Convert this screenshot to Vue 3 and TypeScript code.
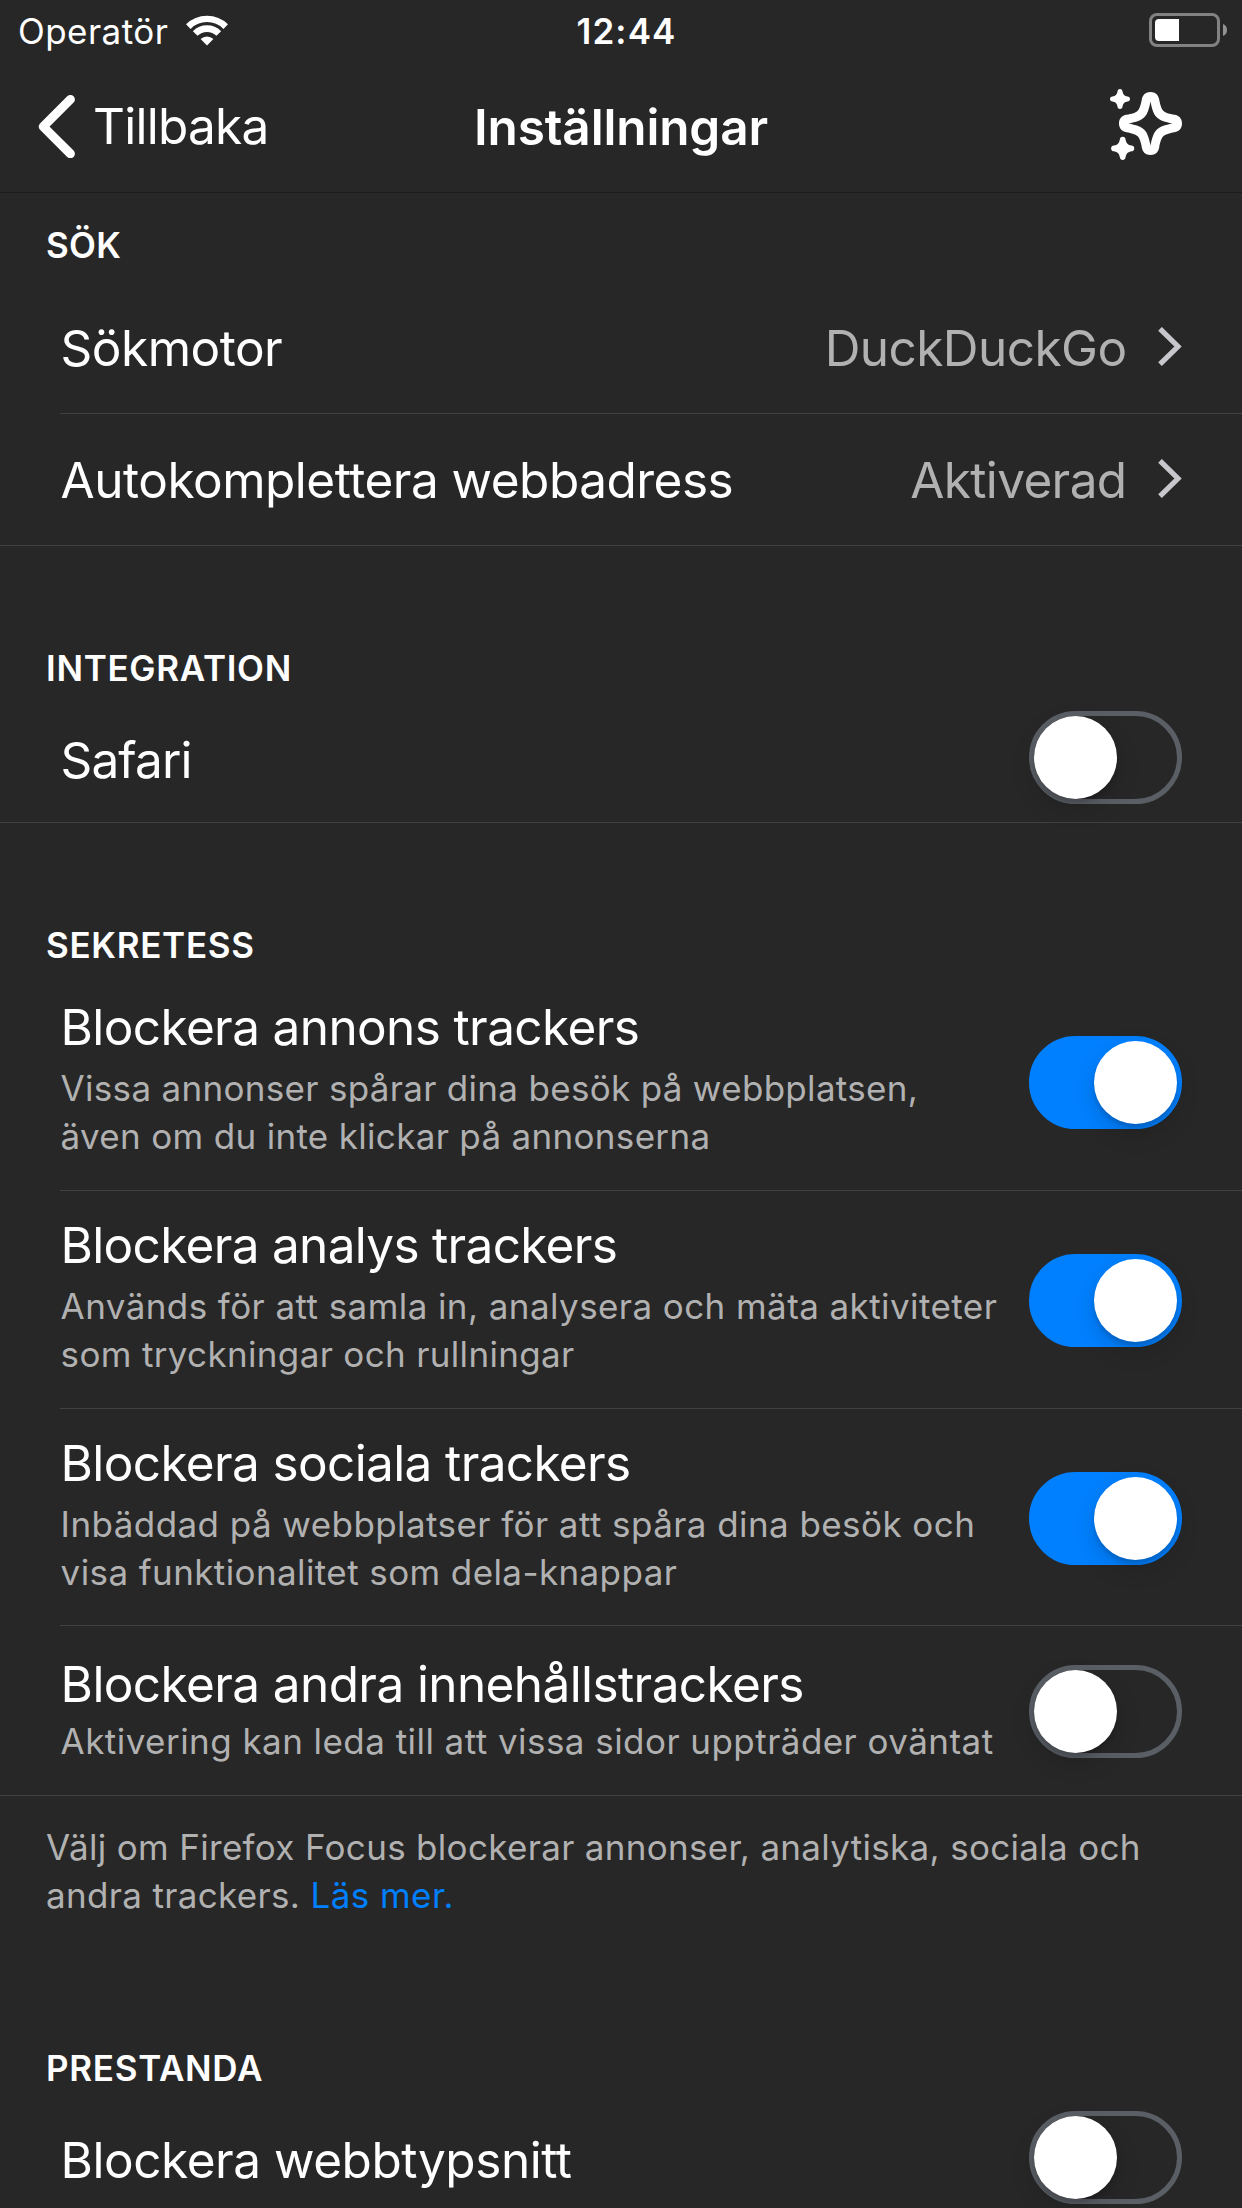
<script setup lang="ts">
import { ref } from 'vue'

interface TextRun {
  text: string
  tracking: number
}

interface LinkRow {
  label: TextRun
  value: TextRun
}

interface TrackerRow {
  label: TextRun
  lines: TextRun[]
  on: boolean
  size: string
}

const run = (text: string, tracking: number): TextRun => ({ text, tracking })
const spacing = (item: TextRun) => ({ letterSpacing: `${item.tracking}px` })

const links: LinkRow[] = [
  { label: run('Sökmotor', -0.506), value: run('DuckDuckGo', -0.568) },
  { label: run('Autokomplettera webbadress', -0.498), value: run('Aktiverad', -0.62) },
]

const safariOn = ref(false)
const webFontsOn = ref(false)

const trackers = ref<TrackerRow[]>([
  {
    label: run('Blockera annons trackers', -0.62),
    lines: [
      run('Vissa annonser spårar dina besök på webbplatsen,', 0.31),
      run('även om du inte klickar på annonserna', 0.32),
    ],
    on: true,
    size: 'tall',
  },
  {
    label: run('Blockera analys trackers', -0.69),
    lines: [
      run('Används för att samla in, analysera och mäta aktiviteter', 0.42),
      run('som tryckningar och rullningar', 0.34),
    ],
    on: true,
    size: 'tall',
  },
  {
    label: run('Blockera sociala trackers', -0.63),
    lines: [
      run('Inbäddad på webbplatser för att spåra dina besök och', 0.425),
      run('visa funktionalitet som dela-knappar', 0.4),
    ],
    on: true,
    size: 'tall tight',
  },
  {
    label: run('Blockera andra innehållstrackers', -0.6),
    lines: [run('Aktivering kan leda till att vissa sidor uppträder oväntat', 0.45)],
    on: false,
    size: 'short',
  },
])
</script>

<template>
  <div class="screen">
    <header class="status-bar">
      <div class="carrier">
        <span class="carrier-name">Operatör</span>
        <svg class="wifi" width="42" height="31" viewBox="0 0 42 31">
          <g fill="none" stroke="#fff">
            <path d="M2.3 11.6A26.6 26.6 0 0 1 39.7 11.6" stroke-width="6.4" />
            <path d="M9.2 18.5A16.7 16.7 0 0 1 32.8 18.5" stroke-width="6.6" />
          </g>
          <path d="M21 30.6L14.6 24.1A9.2 9.2 0 0 1 27.4 24.1Z" fill="#fff" />
        </svg>
      </div>
      <div class="clock">12:44</div>
      <svg class="battery" width="78" height="34" viewBox="0 0 78 34">
        <rect x="1.5" y="1.5" width="68" height="31" rx="6.5" fill="none" stroke="#828282" stroke-width="3" />
        <path d="M30 6V28H10Q6 28 6 24V10Q6 6 10 6Z" fill="#fff" />
        <path d="M74 11Q78 12.5 78 17T74 23Z" fill="#939393" />
      </svg>
    </header>

    <nav class="nav-bar">
      <button class="back" type="button">
        <svg width="37" height="64" viewBox="0 0 37 64">
          <path d="M32.4 5.4L5.2 32.6L32.4 59.8" fill="none" stroke="#fff" stroke-width="9" stroke-linecap="round" stroke-linejoin="round" />
        </svg>
        <span>Tillbaka</span>
      </button>
      <h1 class="title">Inställningar</h1>
      <button class="whats-new" type="button" aria-label="Nyheter">
        <svg width="72" height="71" viewBox="0 0 72 71" fill="#fff">
          <path
            transform="translate(40.5 34.5)"
            fill-rule="evenodd"
            d="M-8.7-24C-8-28.5-5-31.5 0-31.5S8-28.5 8.7-24C9.5-19 11-14.5 12.8-12.8C14.5-11 19-9.5 24-8.7C28.5-8 31.5-5 31.5 0S28.5 8 24 8.7C19 9.5 14.5 11 12.8 12.8C11 14.5 9.5 19 8.7 24C8 28.5 5 31.5 0 31.5S-8 28.5-8.7 24C-9.5 19-11 14.5-12.8 12.8C-14.5 11-19 9.5-24 8.7C-28.5 8-31.5 5-31.5 0S-28.5-8-24-8.7C-19-9.5-14.5-11-12.8-12.8C-11-14.5-9.5-19-8.7-24ZM0-22C-1.4-14.5-3.2-9-6.2-6.2C-9-3.2-14.5-1.4-22 0C-14.5 1.4-9 3.2-6.2 6.2C-3.2 9-1.4 14.5 0 22C1.4 14.5 3.2 9 6.2 6.2C9 3.2 14.5 1.4 22 0C14.5-1.4 9-3.2 6.2-6.2C3.2-9 1.4-14.5 0-22Z"
          />
          <path
            transform="translate(10 10)"
            d="M0-10C1.7-10 2.3-9 2.5-7.5C3-4.5 4.5-3 7.5-2.5C9-2.3 10-1.7 10 0S9 2.3 7.5 2.5C4.5 3 3 4.5 2.5 7.5C2.3 9 1.7 10 0 10S-2.3 9-2.5 7.5C-3 4.5-4.5 3-7.5 2.5C-9 2.3-10 1.7-10 0S-9-2.3-7.5-2.5C-4.5-3-3-4.5-2.5-7.5C-2.3-9-1.7-10 0-10Z"
          />
          <path
            transform="translate(12.7 59.4) scale(1.16)"
            d="M0-10C1.7-10 2.3-9 2.5-7.5C3-4.5 4.5-3 7.5-2.5C9-2.3 10-1.7 10 0S9 2.3 7.5 2.5C4.5 3 3 4.5 2.5 7.5C2.3 9 1.7 10 0 10S-2.3 9-2.5 7.5C-3 4.5-4.5 3-7.5 2.5C-9 2.3-10 1.7-10 0S-9-2.3-7.5-2.5C-4.5-3-3-4.5-2.5-7.5C-2.3-9-1.7-10 0-10Z"
          />
        </svg>
      </button>
    </nav>

    <main>
      <section>
        <h2 class="section-title first">SÖK</h2>
        <div class="rows">
          <div v-for="item in links" :key="item.label.text" class="row link-row">
            <span class="label" :style="spacing(item.label)">{{ item.label.text }}</span>
            <span class="value" :style="spacing(item.value)">{{ item.value.text }}</span>
            <svg class="chevron" width="24" height="39" viewBox="0 0 24 39">
              <path d="M2 1.8L20 19.5L2 37.2" fill="none" stroke="#c7c7cc" stroke-width="5.2" />
            </svg>
          </div>
        </div>
      </section>

      <section>
        <h2 class="section-title">INTEGRATION</h2>
        <div class="rows">
          <div class="row toggle-row">
            <span class="label safari">Safari</span>
            <button class="switch" :class="{ on: safariOn }" type="button" @click="safariOn = !safariOn">
              <span class="knob"></span>
            </button>
          </div>
        </div>
      </section>

      <section>
        <h2 class="section-title spaced">SEKRETESS</h2>
        <div class="rows">
          <div v-for="item in trackers" :key="item.label.text" class="row tracker-row" :class="item.size">
            <div class="copy">
              <div class="label" :style="spacing(item.label)">{{ item.label.text }}</div>
              <div class="detail">
                <div v-for="line in item.lines" :key="line.text" :style="spacing(line)">{{ line.text }}</div>
              </div>
            </div>
            <button class="switch" :class="{ on: item.on }" type="button" @click="item.on = !item.on">
              <span class="knob"></span>
            </button>
          </div>
        </div>
        <p class="footnote">
          Välj om Firefox Focus blockerar annonser, analytiska, sociala och<br />
          <span class="footnote-end">andra trackers. </span><a class="more">Läs mer.</a>
        </p>
      </section>

      <section>
        <h2 class="section-title">PRESTANDA</h2>
        <div class="row toggle-row">
          <span class="label fonts">Blockera webbtypsnitt</span>
          <button class="switch" :class="{ on: webFontsOn }" type="button" @click="webFontsOn = !webFontsOn">
            <span class="knob"></span>
          </button>
        </div>
      </section>
    </main>
  </div>
</template>

<style>
body {
  margin: 0;
  background: #272727;
}
</style>

<style scoped>
.screen {
  width: 1242px;
  height: 2208px;
  overflow: hidden;
  background: #272727;
  color: #fff;
  font-family: Inter, 'Liberation Sans', sans-serif;
  font-size: 49.5px;
  white-space: nowrap;
}

button {
  padding: 0;
  border: 0;
  background: none;
  color: inherit;
  font: inherit;
}

svg {
  display: block;
  flex: none;
}

.status-bar {
  display: grid;
  grid-template-columns: 1fr auto 1fr;
  height: 62px;
  padding: 0 15px 0 18px;
  font-size: 35px;
  line-height: 62px;
}

.carrier {
  display: flex;
  align-items: flex-start;
  gap: 18px;
}

.carrier-name {
  letter-spacing: 0.454px;
}

.wifi {
  margin-top: 14.5px;
}

.clock {
  padding-left: 8px;
  font-weight: 600;
  letter-spacing: 1.131px;
}

.battery {
  justify-self: end;
  margin-top: 13px;
}

.nav-bar {
  display: grid;
  grid-template-columns: 1fr auto 1fr;
  align-items: center;
  box-sizing: border-box;
  height: 131px;
  padding: 0 60px 0 38px;
  border-bottom: 1px solid #1b1b1b;
}

.back {
  display: flex;
  align-items: center;
  gap: 18px;
  padding-bottom: 2px;
  line-height: 64px;
  letter-spacing: -0.75px;
}

.title {
  margin: 0 0 0 22px;
  font-size: 49.5px;
  font-weight: 600;
  line-height: 64px;
  letter-spacing: -0.145px;
}

.whats-new {
  justify-self: end;
  margin-bottom: 5px;
}

.section-title {
  box-sizing: border-box;
  height: 147px;
  margin: 0;
  padding: 98px 46px 0;
  font-size: 35px;
  font-weight: 600;
  line-height: 48px;
  letter-spacing: 0.7px;
}

.section-title.first {
  height: 89px;
  padding-top: 28px;
  letter-spacing: 0.268px;
}

.section-title.spaced {
  height: 150px;
}

.rows {
  border-bottom: 1px solid #414143;
}

.row {
  display: flex;
  box-sizing: border-box;
  align-items: center;
  margin-left: 60px;
  padding-right: 60px;
  border-bottom: 1px solid #414143;
}

.row:last-child {
  border-bottom: 0;
}

.label {
  padding-left: 0.6px;
  line-height: 60px;
}

.link-row {
  height: 132px;
}

.link-row:last-child {
  height: 131px;
}

.value {
  margin-left: auto;
  color: #b1b1b1;
  line-height: 60px;
}

.chevron {
  margin: -2px 0 0 31.5px;
}

.toggle-row {
  justify-content: space-between;
  height: 129px;
}

.toggle-row .label {
  padding-top: 5px;
}

.safari {
  letter-spacing: -0.9px;
}

.fonts {
  letter-spacing: -0.46px;
}

.tracker-row {
  align-items: flex-start;
  justify-content: space-between;
  height: 218px;
  padding-top: 24px;
}

.tracker-row.tight {
  height: 217px;
}

.tracker-row.short {
  height: 169px;
  padding-top: 28px;
}

.tracker-row .switch {
  margin-top: 39px;
}

.tracker-row.short .switch {
  margin-top: 11px;
}

.detail {
  margin-top: 6.5px;
  padding-left: 0.6px;
  color: #b1b1b1;
  font-size: 35px;
  line-height: 48px;
}

.short .detail {
  margin-top: 3px;
}

.switch {
  display: flex;
  flex: none;
  box-sizing: border-box;
  width: 153px;
  height: 93px;
  border: 5px solid #5a5f66;
  border-radius: 47px;
}

.switch.on {
  justify-content: flex-end;
  border-color: #0080ff;
  background: #0080ff;
}

.knob {
  width: 83px;
  height: 83px;
  border-radius: 50%;
  background: #fff;
  box-shadow: 0 9px 24px rgba(0, 0, 0, 0.15), 0 4px 4px rgba(0, 0, 0, 0.14);
}

.footnote {
  box-sizing: border-box;
  height: 150px;
  margin: 0;
  padding: 27px 46px 0;
  color: #b1b1b1;
  font-size: 35px;
  line-height: 48px;
  letter-spacing: 0.313px;
}

.footnote-end {
  letter-spacing: 0.33px;
}

.more {
  color: #0080ff;
  letter-spacing: 0.455px;
}
</style>
